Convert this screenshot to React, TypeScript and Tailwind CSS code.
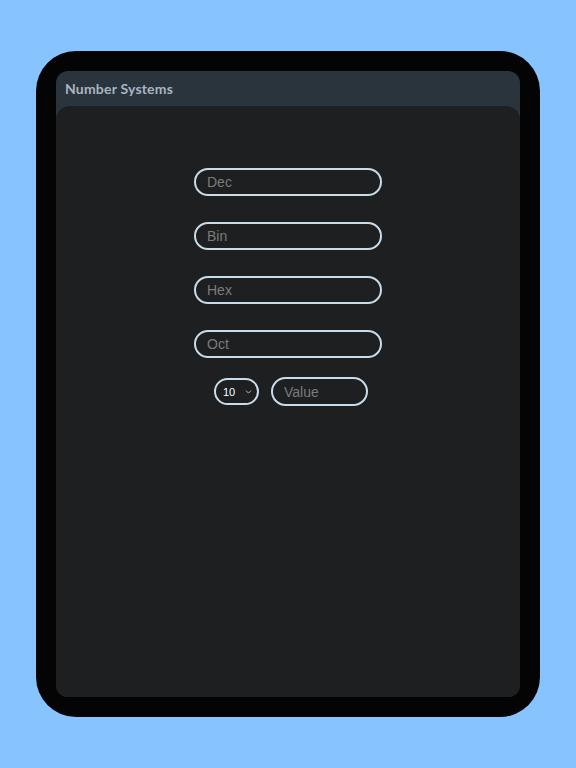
import { ChevronDown } from 'lucide-react';

const fields = ['Dec', 'Bin', 'Hex', 'Oct'];

export default function App() {
  return (
    <div className="flex min-h-[768px] w-full items-center justify-center bg-[#87c3ff]">
      <div className="h-[666px] w-[504px] rounded-[40px] bg-[#040404] p-5">
        <div className="flex h-full flex-col overflow-hidden rounded-[12px] bg-[#2a343c]">
          <header className="flex h-[35px] shrink-0 items-center px-[9px]">
            <h1 className="font-['Lato',sans-serif] text-[14px] font-bold tracking-[0.2px] text-[#a9b5c1]">
              Number Systems
            </h1>
          </header>

          <main className="flex flex-1 flex-col items-center rounded-t-[14px] bg-[#1d1f21] pt-[62px]">
            <div className="flex flex-col gap-[26px]">
              {fields.map((field) => (
                <input
                  key={field}
                  placeholder={field}
                  className="h-[28px] w-[188px] rounded-full border-2 border-[#c9dcea] bg-transparent px-[11px] font-['Liberation_Sans',sans-serif] text-[14px] text-[#e5e5e5] outline-none placeholder:text-[#7b7b7b]"
                />
              ))}
            </div>

            <div className="mt-[19px] flex items-center gap-[12px] pl-[6px]">
              <div className="relative">
                <select className="h-[27px] w-[45px] appearance-none rounded-full border-2 border-[#c9dcea] bg-[#1d1f21] pl-[7px] font-['Liberation_Sans',sans-serif] text-[11px] text-white outline-none">
                  <option>10</option>
                  <option>2</option>
                  <option>8</option>
                  <option>16</option>
                </select>
                <ChevronDown className="pointer-events-none absolute right-[6px] top-1/2 h-[9px] w-[9px] -translate-y-1/2 text-[#bfc8cf]" strokeWidth={2.5} />
              </div>
              <input
                placeholder="Value"
                className="h-[29px] w-[97px] rounded-full border-2 border-[#c9dcea] bg-transparent px-[11px] font-['Liberation_Sans',sans-serif] text-[14px] text-[#e5e5e5] outline-none placeholder:text-[#7b7b7b]"
              />
            </div>
          </main>
        </div>
      </div>
    </div>
  );
}
